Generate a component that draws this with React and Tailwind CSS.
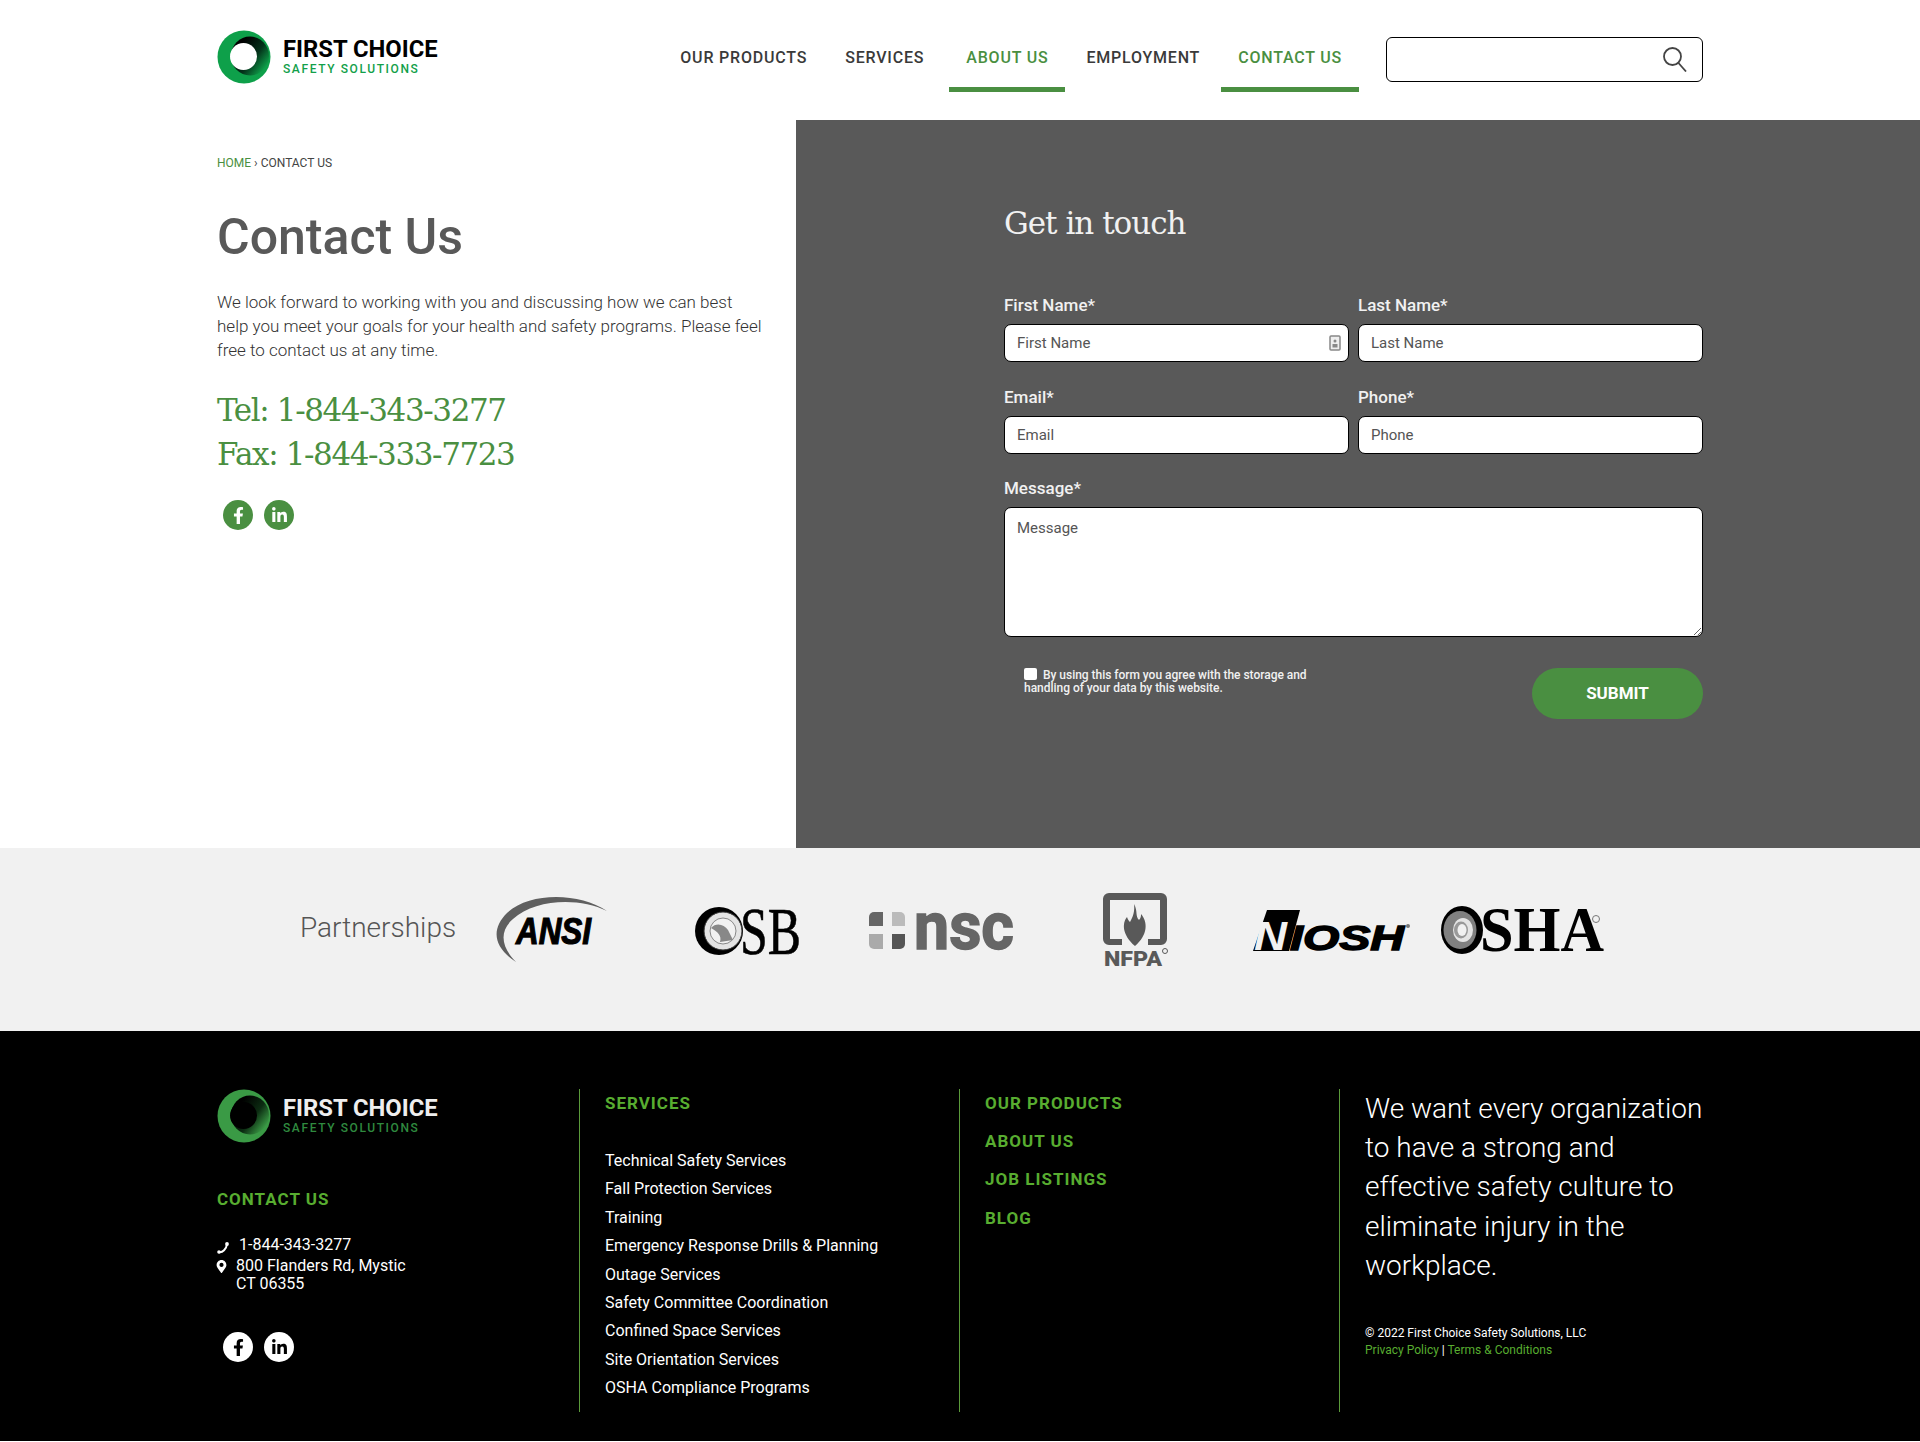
import React from 'react';
import { FaFacebookF, FaLinkedinIn, FaMapMarkerAlt } from 'react-icons/fa';

const ROBOTO = "font-['Roboto',sans-serif]";
const services = [
    'Technical Safety Services',
    'Fall Protection Services',
    'Training',
    'Emergency Response Drills & Planning',
    'Outage Services',
    'Safety Committee Coordination',
    'Confined Space Services',
    'Site Orientation Services',
    'OSHA Compliance Programs',
];

function LogoMark({ dark, id }) {
    return (
        <svg width="54" height="54" viewBox="0 0 54 54" className="shrink-0">
            <defs>
                <linearGradient id={id} x1="0.25" y1="0.2" x2="0.95" y2="0.75">
                    <stop offset="0" stopColor="#000" />
                    <stop offset="0.55" stopColor={dark ? '#0c2c12' : '#04321a'} />
                    <stop offset="1" stopColor={dark ? '#3a9a45' : '#0ea04a'} />
                </linearGradient>
            </defs>
            <circle cx="27" cy="27" r="26.5" fill={dark ? '#3a9a45' : '#0ea04a'} />
            <ellipse cx="33" cy="26" rx="19" ry="19.5" fill={`url(#${id})`} />
            <circle cx="26.5" cy="26.5" r="13.5" fill={dark ? '#000' : '#fff'} />
        </svg>
    );
}

function Logo({ dark, id }) {
    return (
        <div className="flex items-center gap-[12px]">
            <LogoMark dark={dark} id={id} />
            <div className={`${ROBOTO} -mt-[2px]`}>
                <div className={`text-[23.8px] leading-[26px] font-bold ${dark ? 'text-[#eeeeee]' : 'text-black'}`}>FIRST CHOICE</div>
                <div className={`text-[12px] leading-[14px] font-medium tracking-[1.6px] ${dark ? 'text-[#2f8a3f]' : 'text-[#12a04a]'}`}>SAFETY SOLUTIONS</div>
            </div>
        </div>
    );
}

function Socials({ dark }) {
    const cls = dark ? 'bg-white text-black' : 'bg-[#4a8f41] text-white';
    return (
        <div className="flex gap-[11px] pl-[6px]">
            <span className={`w-[30px] h-[30px] rounded-full flex items-center justify-center ${cls}`}><FaFacebookF size={17} /></span>
            <span className={`w-[30px] h-[30px] rounded-full flex items-center justify-center ${cls}`}><FaLinkedinIn size={17} /></span>
        </div>
    );
}

function NavItem({ label, active, className = '' }) {
    return (
        <a className={`h-[92px] pt-[48px] px-[17px] text-[16px] leading-[20px] font-medium tracking-[0.8px] border-b-[5px] ${active ? 'text-[#4a8f41] border-[#4a8f41]' : 'text-[#3a3a3a] border-transparent'} ${className}`}>
            {label}
        </a>
    );
}

function Field({ label, placeholder, icon }) {
    return (
        <div className="w-[345px]">
            <label className="block text-[17px] leading-[20px] font-medium text-[#f1f1f1] mb-[9px]">{label}</label>
            <div className="relative">
                <input placeholder={placeholder} className="w-full h-[38px] bg-white border border-black rounded-[7px] px-[12px] text-[15px] text-[#444] placeholder:text-[#555] outline-none" />
                {icon && (
                    <svg width="12" height="16" viewBox="0 0 12 16" className="absolute right-[8px] top-[11px]">
                        <rect x="1" y="1" width="10" height="14" rx="1" fill="#eee" stroke="#888" strokeWidth="1.5" />
                        <circle cx="6" cy="6" r="1.5" fill="#888" />
                        <rect x="3.5" y="9" width="5" height="3.5" fill="#888" />
                    </svg>
                )}
            </div>
        </div>
    );
}

function AnsiLogo() {
    return (
        <svg width="114" height="70" viewBox="0 0 114 70" className="overflow-visible ml-[2px]">
            <path d="M112 16 C84 -3 34 -3 12 18 C-4 34 -2 52 21 67 C6 52 4 36 18 24 C40 4 84 2 112 16 Z" fill="#5f5f5f" />
            <text x="21" y="49" fontFamily="Liberation Sans" fontWeight="700" fontStyle="italic" fontSize="36" textLength="75" lengthAdjust="spacingAndGlyphs" stroke="#000" strokeWidth="1.2" fill="#000">ANSI</text>
        </svg>
    );
}

function CsbLogo() {
    return (
        <svg width="108" height="50" viewBox="0 0 108 50" className="overflow-visible ml-[6px] mt-[5px]">
            <circle cx="24" cy="24" r="24" fill="#000" />
            <circle cx="28" cy="24" r="19" fill="#e4e4e4" stroke="#333" />
            <circle cx="28" cy="24" r="13" fill="#f1f1f1" stroke="#888" />
            <path d="M16 21 C21 15 29 17 33 23 L38 33 L25 35 C27 29 23 25 16 21 Z" fill="#888" />
            <text x="45" y="47" fontFamily="Liberation Serif" fontSize="68" textLength="61" lengthAdjust="spacingAndGlyphs" stroke="#000" strokeWidth="0.6" fill="#000">SB</text>
        </svg>
    );
}

function NscLogo() {
    return (
        <svg width="148" height="40" viewBox="0 0 148 40" className="overflow-visible ml-[5px] mt-[2px]">
            <path d="M0 15 V6 a5 5 0 0 1 5 -5 H14 V15 Z" fill="#666" />
            <path d="M23 1 H31 a5 5 0 0 1 5 5 V15 H23 Z" fill="#bbb" />
            <path d="M0 23 H14 V38 H5 a5 5 0 0 1 -5 -5 Z" fill="#aaa" />
            <path d="M23 23 H36 V33 a5 5 0 0 1 -5 5 H23 Z" fill="#555" />
            <text x="45" y="38" fontFamily="Roboto" fontWeight="700" fontSize="66" textLength="100" lengthAdjust="spacingAndGlyphs" stroke="#666" strokeWidth="1.5" fill="#666">nsc</text>
        </svg>
    );
}

function NfpaLogo() {
    return (
        <svg width="66" height="74" viewBox="0 0 66 74" className="overflow-visible">
            <path d="M7 0 H59 a6 6 0 0 1 6 6 V46 a6 6 0 0 1 -6 6 H46 V46 H58 V7 H8 V46 H20 V52 H7 a6 6 0 0 1 -6 -6 V6 a6 6 0 0 1 6 -6 Z" fill="#595959" />
            <path d="M32 11 C36 18 33 23 37 27 C39 25 39 23 39 21 C46 29 46 42 33 53 C20 42 20 30 25 24 C26 27 27 28 28 29 C31 24 33 18 32 11 Z" fill="#595959" />
            <text x="2" y="73" fontFamily="Roboto" fontWeight="900" fontSize="21" textLength="58" lengthAdjust="spacingAndGlyphs" fill="#595959">NFPA</text>
            <circle cx="63" cy="58" r="2.5" fill="none" stroke="#595959" />
        </svg>
    );
}

function NioshLogo() {
    return (
        <svg width="160" height="44" viewBox="0 0 160 44" className="overflow-visible ml-[8px] mt-[5px]">
            <path d="M14 0 H47 L36 41 H0 Z" fill="#000" />
            <text x="1" y="40" fontFamily="Liberation Sans" fontWeight="700" fontStyle="italic" fontSize="40" textLength="33" lengthAdjust="spacingAndGlyphs" fill="#f1f1f1">N</text>
            <text x="37" y="40" fontFamily="Liberation Sans" fontWeight="700" fontStyle="italic" fontSize="35" textLength="114" lengthAdjust="spacingAndGlyphs" stroke="#000" strokeWidth="1.4" fill="#000">IOSH</text>
            <circle cx="155" cy="16" r="2" fill="#777" />
        </svg>
    );
}

function OshaLogo() {
    return (
        <svg width="166" height="50" viewBox="0 0 166 50" className="overflow-visible mt-[2px]">
            <ellipse cx="21" cy="24" rx="21" ry="24" fill="#000" />
            <ellipse cx="19" cy="24" rx="16.5" ry="19" fill="#808080" />
            <ellipse cx="22" cy="24" rx="10" ry="12" fill="#e4e4e4" />
            <ellipse cx="20" cy="24" rx="7" ry="8.5" fill="#999" />
            <ellipse cx="21" cy="24" rx="4.5" ry="6" fill="#f1f1f1" />
            <text x="39" y="45" fontFamily="Liberation Serif" fontWeight="700" fontSize="64" textLength="124" lengthAdjust="spacingAndGlyphs" fill="#000">SHA</text>
            <circle cx="155" cy="13" r="3.5" fill="none" stroke="#777" />
        </svg>
    );
}

function FooterHeading({ children, className = '' }) {
    return <div className={`text-[17px] leading-[20px] font-bold tracking-[1px] text-[#58ad30] ${className}`}>{children}</div>;
}

export default function App() {
    return (
        <div className={`${ROBOTO} bg-white w-[1920px]`}>
            <header className="h-[120px] pl-[217px] pr-[217px] flex items-start justify-between">
                <div className="pt-[30px]"><Logo id="logoLight" /></div>
                <div className="flex items-start">
                    <nav className="flex gap-[4px]">
                        <NavItem label="OUR PRODUCTS" />
                        <NavItem label="SERVICES" />
                        <NavItem label="ABOUT US" active className="ml-[4px]" />
                        <NavItem label="EMPLOYMENT" />
                        <NavItem label="CONTACT US" active />
                    </nav>
                    <div className="ml-[27px] mt-[37px] w-[317px] h-[45px] border border-black rounded-[6px] flex items-center justify-end pr-[15px]">
                        <svg width="24" height="25" viewBox="0 0 24 25" fill="none" stroke="#444" strokeWidth="1.8">
                            <circle cx="9.5" cy="9.5" r="8.5" />
                            <path d="M15.5 16 L23 24.5" />
                        </svg>
                    </div>
                </div>
            </header>

            <main className="flex h-[728px]">
                <section className="w-[796px] pl-[217px] pr-[30px]">
                    <div className="pt-[35px] text-[12px] leading-[16px] text-[#444]"><span className="text-[#4a8f41]">HOME</span> › CONTACT US</div>
                    <h1 className="mt-[38px] text-[50px] leading-[56px] font-medium text-[#595959]">Contact Us</h1>
                    <p className="mt-[25px] text-[17px] leading-[24px] font-light text-[#333]">We look forward to working with you and discussing how we can best help you meet your goals for your health and safety programs. Please feel free to contact us at any time.</p>
                    <div className="mt-[26px] font-['DejaVu_Serif',serif] text-[31px] leading-[44px] tracking-[-1.4px] text-[#4a8f41]">
                        <div>Tel: 1-844-343-3277</div>
                        <div>Fax: 1-844-333-7723</div>
                    </div>
                    <div className="mt-[24px]"><Socials /></div>
                </section>
                <section className="flex-1 bg-[#595959] pl-[208px] pr-[217px]">
                    <h2 className="pt-[83px] font-['DejaVu_Serif',serif] text-[31px] leading-[40px] tracking-[-1px] text-[#f1f1f1]">Get in touch</h2>
                    <div className="mt-[52px] flex flex-col gap-[25px]">
                        <div className="flex justify-between">
                            <Field label="First Name*" placeholder="First Name" icon />
                            <Field label="Last Name*" placeholder="Last Name" />
                        </div>
                        <div className="flex justify-between">
                            <Field label="Email*" placeholder="Email" />
                            <Field label="Phone*" placeholder="Phone" />
                        </div>
                    </div>
                    <div className="mt-[24px]">
                        <label className="block text-[17px] leading-[20px] font-medium text-[#f1f1f1] mb-[9px]">Message*</label>
                        <textarea placeholder="Message" className="block w-full h-[130px] bg-white border border-black rounded-[7px] px-[12px] py-[9px] text-[15px] placeholder:text-[#555] outline-none" />
                    </div>
                    <div className="mt-[31px] flex justify-between items-start">
                        <div className="ml-[20px] w-[290px] text-[12px] leading-[13px] font-medium tracking-[-0.03px] text-[#f1f1f1]">
                            <span className="inline-block w-[13px] h-[12px] bg-white rounded-[2px] mr-[6px] align-[-1px]" />
                            By using this form you agree with the storage and handling of your data by this website.
                        </div>
                        <button className="w-[171px] h-[51px] rounded-full bg-[#4a8f41] text-white text-[17px] font-bold">SUBMIT</button>
                    </div>
                </section>
            </main>

            <section className="h-[183px] bg-[#f1f1f1] pl-[300px] pb-[20px] flex items-center">
                <div className="w-[154px] mb-[3px] text-[28px] font-light text-[#555] whitespace-nowrap">Partnerships</div>
                <div className="grid grid-cols-6 w-[1167px] items-center justify-items-center">
                    <AnsiLogo />
                    <CsbLogo />
                    <NscLogo />
                    <NfpaLogo />
                    <NioshLogo />
                    <OshaLogo />
                </div>
            </section>

            <footer className="h-[410px] bg-black pl-[217px] pr-[217px] pt-[58px] flex">
                <div className="w-[362px]">
                    <Logo dark id="logoDark" />
                    <FooterHeading className="mt-[46px]">CONTACT US</FooterHeading>
                    <div className="mt-[25px] text-[16px] leading-[18px] text-white">
                        <div className="flex items-center h-[21px]">
                            <svg width="12" height="12" viewBox="0 0 12 12" className="mr-[10px] mt-[7px]">
                                <path d="M1.5 10 C5.5 11 9.5 7 10 2" fill="none" stroke="#fff" strokeWidth="2" />
                                <circle cx="2" cy="10" r="1.8" fill="#fff" />
                                <circle cx="10" cy="2" r="1.9" fill="#fff" />
                            </svg>
                            <span>1-844-343-3277</span>
                        </div>
                        <div className="flex items-start mt-[2px]">
                            <FaMapMarkerAlt size={13} className="-ml-[2px] mr-[8px] mt-[3px]" />
                            <span>800 Flanders Rd, Mystic<br />CT 06355</span>
                        </div>
                    </div>
                    <div className="mt-[39px]"><Socials dark /></div>
                </div>
                <div className="w-[380px] h-[323px] border-l border-[#5a9a3a] pl-[25px]">
                    <FooterHeading className="mt-[4px]">SERVICES</FooterHeading>
                    <ul className="mt-[34px] text-[16px] leading-[28.4px] text-white">
                        {services.map(s => <li key={s}>{s}</li>)}
                    </ul>
                </div>
                <div className="w-[380px] h-[323px] border-l border-[#5a9a3a] pl-[25px]">
                    <div className="mt-[4px] flex flex-col gap-[18px]">
                        <FooterHeading>OUR PRODUCTS</FooterHeading>
                        <FooterHeading>ABOUT US</FooterHeading>
                        <FooterHeading>JOB LISTINGS</FooterHeading>
                        <FooterHeading className="mt-[1px]">BLOG</FooterHeading>
                    </div>
                </div>
                <div className="flex-1 h-[323px] border-l border-[#5a9a3a] pl-[25px]">
                    <p className="text-[28px] leading-[39.2px] font-light text-white">We want every organization to have a strong and effective safety culture to eliminate injury in the workplace.</p>
                    <div className="mt-[40px] text-[12px] leading-[17px] text-white">
                        <div>© 2022 First Choice Safety Solutions, LLC</div>
                        <div><span className="text-[#58ad30]">Privacy Policy</span> | <span className="text-[#58ad30]">Terms &amp; Conditions</span></div>
                    </div>
                </div>
            </footer>
        </div>
    );
}
